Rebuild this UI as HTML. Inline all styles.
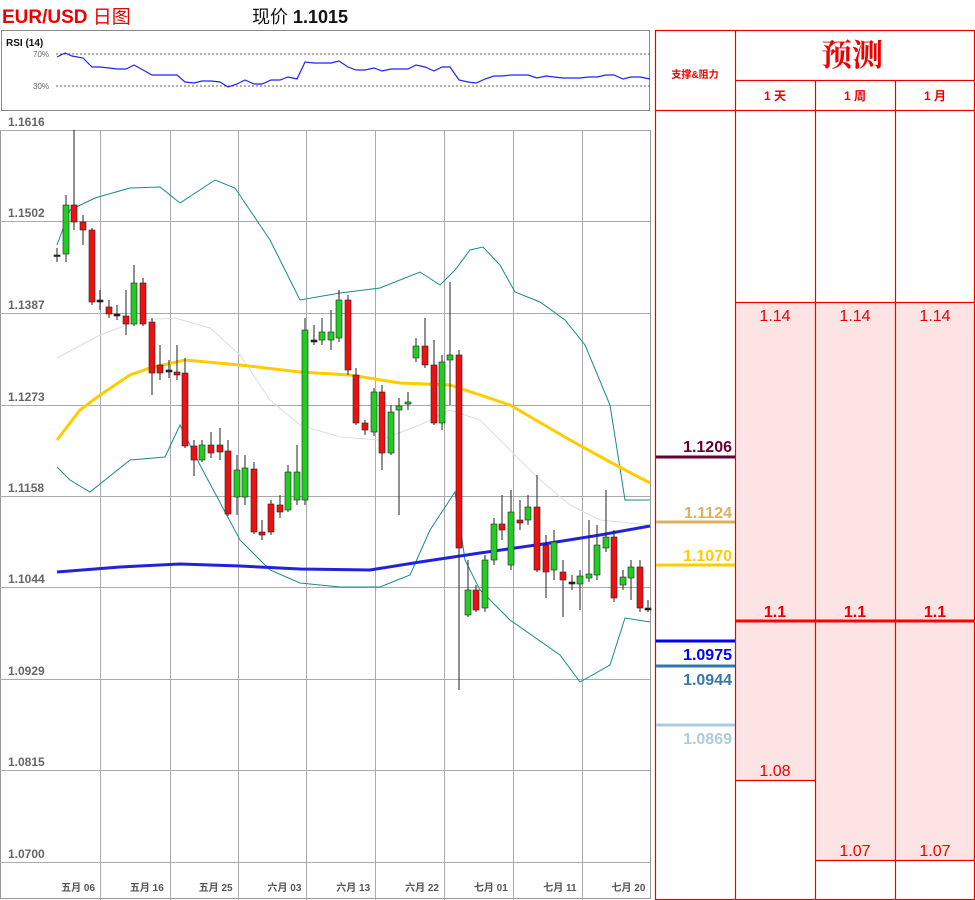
<!DOCTYPE html>
<html><head><meta charset="utf-8"><style>
body{margin:0;width:975px;height:900px;background:#fff;position:relative;overflow:hidden;font-family:"Liberation Sans","Noto Sans CJK SC",sans-serif}
.a{position:absolute}
</style></head><body>
<div class="a" style="left:2px;top:2px;color:#e00;font-weight:bold;font-size:19px">EUR/USD <span style="font-weight:normal">日图</span></div>
<div class="a" style="left:252px;top:3px;color:#111;font-size:18px">现价 <b>1.1015</b></div>
<svg class="a" style="left:0;top:0" width="975" height="900" id="s">
<rect x="1.5" y="30.5" width="648" height="80" fill="#fff" stroke="#888"/>
<text x="6" y="46" font-size="10" font-weight="bold" fill="#111" font-family="Liberation Sans">RSI (14)</text>
<line x1="56" y1="54" x2="650" y2="54" stroke="#666" stroke-dasharray="2,2"/>
<line x1="56" y1="86" x2="650" y2="86" stroke="#666" stroke-dasharray="2,2"/>
<text x="33" y="57" font-size="8" fill="#666" font-family="Liberation Sans">70%</text>
<text x="33" y="89" font-size="8" fill="#666" font-family="Liberation Sans">30%</text>
<polyline fill="none" stroke="#22f" stroke-width="1.2" points="57,57 65,53 72,56 83,58 92,67 100,67 109,68 117,69 126,69 134,65 143,70 152,75 160,75 169,75 177,75 185,82 194,83 202,81 211,81 220,82 228,87 237,84 245,80 254,84 262,84 271,80 280,80 288,77 297,79 305,62 314,63 322,63 331,63 339,61 348,67 356,70 365,70 374,68 382,71 391,69 399,69 408,69 416,65 425,67 434,71 442,67 450,67 459,80 468,82 476,83 485,79 494,76 502,76 511,75 520,75 528,75 537,78 546,76 554,77 563,78 572,78 580,78 589,77 597,77 606,75 614,75 623,79 631,77 640,77 650,79"/>
<rect x="0.5" y="130.5" width="650" height="768" fill="#fff" stroke="#999"/>
<g id="grid" stroke="#aaa" stroke-width="1"></g>
<g font-family="Liberation Sans" font-size="12" font-weight="bold" fill="#666" id="ylab"></g>
<g font-family="Liberation Sans,Noto Sans CJK SC" font-size="10" font-weight="bold" fill="#555" id="xlab"></g>
<polyline fill="none" stroke="#ddd" stroke-width="1" points="57,358 100,335 140,320 175,318 210,328 240,355 270,400 300,425 340,437 380,440 420,425 450,410 480,420 510,450 540,480 570,505 600,520 650,525"/>
<polyline fill="none" stroke="#1a8a8a" stroke-width="1" points="57,245 70,210 95,198 130,188 160,187 180,203 215,180 235,188 270,240 300,300 340,293 380,288 420,272 440,285 455,270 470,250 483,247 500,265 515,292 540,302 565,320 585,345 610,405 625,500 650,500"/>
<polyline fill="none" stroke="#1a8a8a" stroke-width="1" points="57,467 70,480 90,492 130,460 165,457 180,425 200,465 240,540 270,570 300,583 340,587 380,587 410,575 430,530 455,492 465,560 480,590 510,620 560,655 580,682 610,665 625,618 650,622"/>
<polyline fill="none" stroke="#fc0" stroke-width="3" points="57,440 80,410 100,395 130,375 150,368 185,360 240,365 300,372 350,375 400,383 450,385 510,405 570,440 610,462 650,483"/>
<polyline fill="none" stroke="#22d" stroke-width="3" points="57,572 120,567 180,564 240,566 300,569 370,570 420,562 480,553 550,543 600,535 650,526"/>
<g id="c"></g>
<rect x="735" y="302" width="240" height="598" fill="#fde4e4"/>
<rect x="735" y="780" width="80" height="120" fill="#fff"/>
<rect x="815" y="860" width="160" height="40" fill="#fff"/>
<g stroke="#e00" stroke-width="1.2" fill="none">
<rect x="655.5" y="30.5" width="319" height="869"/>
<line x1="735.5" y1="30" x2="735.5" y2="900"/>
<line x1="815.5" y1="80" x2="815.5" y2="900"/>
<line x1="895.5" y1="80" x2="895.5" y2="900"/>
<line x1="735" y1="80.5" x2="975" y2="80.5"/>
<line x1="655" y1="110.5" x2="975" y2="110.5"/>
<line x1="735" y1="302.5" x2="975" y2="302.5"/>
<line x1="735" y1="780.5" x2="815" y2="780.5"/>
<line x1="815" y1="860.5" x2="975" y2="860.5"/>
</g>
<line x1="735" y1="621" x2="975" y2="621" stroke="#f00" stroke-width="3"/>
<g font-family="Liberation Sans,Noto Sans CJK SC" fill="#e00" text-anchor="middle">
<text x="852" y="66" font-size="31" font-weight="bold" font-family="Noto Serif CJK SC,serif">预测</text>
<text x="695" y="78" font-size="10" font-weight="bold">支撑&amp;阻力</text>
<text x="775" y="100" font-size="12" font-weight="bold">1 天</text>
<text x="855" y="100" font-size="12" font-weight="bold">1 周</text>
<text x="935" y="100" font-size="12" font-weight="bold">1 月</text>
<text x="775" y="321" font-size="16">1.14</text><text x="855" y="321" font-size="16">1.14</text><text x="935" y="321" font-size="16">1.14</text>
<text x="775" y="617" font-size="16" font-weight="bold">1.1</text><text x="855" y="617" font-size="16" font-weight="bold">1.1</text><text x="935" y="617" font-size="16" font-weight="bold">1.1</text>
<text x="775" y="776" font-size="16">1.08</text>
<text x="855" y="856" font-size="16">1.07</text><text x="935" y="856" font-size="16">1.07</text>
</g>
<g font-family="Liberation Sans" font-size="16" font-weight="bold" text-anchor="end">
<line x1="656" y1="457" x2="735" y2="457" stroke="#603" stroke-width="3"/><text x="732" y="452" fill="#603">1.1206</text>
<line x1="656" y1="522" x2="735" y2="522" stroke="#dcb060" stroke-width="3"/><text x="732" y="518" fill="#dcb060">1.1124</text>
<line x1="656" y1="565" x2="735" y2="565" stroke="#fc0" stroke-width="3"/><text x="732" y="561" fill="#fc0">1.1070</text>
<line x1="656" y1="641" x2="735" y2="641" stroke="#00f" stroke-width="3"/><text x="732" y="660" fill="#00f">1.0975</text>
<line x1="656" y1="666" x2="735" y2="666" stroke="#37a" stroke-width="3"/><text x="732" y="685" fill="#37a">1.0944</text>
<line x1="656" y1="725" x2="735" y2="725" stroke="#acd" stroke-width="3"/><text x="732" y="744" fill="#acd">1.0869</text>
</g>
</svg>
<script>
var ns="http://www.w3.org/2000/svg";
function el(p,t,a,tx){var e=document.createElementNS(ns,t);for(var k in a)e.setAttribute(k,a[k]);if(tx)e.textContent=tx;p.appendChild(e);return e}
var g=document.getElementById('grid');
var ys=[130,221,313,405,496,587,679,770,862],labs=["1.1616","1.1502","1.1387","1.1273","1.1158","1.1044","1.0929","1.0815","1.0700"];
ys.forEach(function(y,i){el(g,'line',{x1:0,x2:650,y1:y+.5,y2:y+.5});el(document.getElementById('ylab'),'text',{x:8,y:y-4},labs[i])});
var xs=[100,170,238,306,375,444,513,582],dl=["五月 06","五月 16","五月 25","六月 03","六月 13","六月 22","七月 01","七月 11","七月 20"];
xs.forEach(function(x){el(g,'line',{x1:x+.5,x2:x+.5,y1:130,y2:900})});
dl.forEach(function(d,i){el(document.getElementById('xlab'),'text',{x:95+i*68.8,y:891,'text-anchor':'end'},d)});
var c=[[57,255,255,248,262],[66,254,205,195,262],[74,205,222,130,230],[83,222,230,215,245],[92,230,302,228,305],[100,300,302,290,310],[109,307,314,300,318],[117,314,316,305,320],[126,316,324,290,335],[134,324,283,265,326],[143,283,324,278,326],[152,322,373,318,395],[160,365,373,345,380],[169,370,372,360,378],[177,372,375,345,380],[185,373,446,358,448],[194,446,460,440,476],[202,460,445,440,462],[211,445,453,432,458],[220,445,452,428,460],[228,451,514,440,516],[237,497,470,455,515],[245,497,468,455,505],[254,469,532,462,534],[262,532,535,520,540],[271,504,532,500,535],[280,505,512,495,518],[288,510,472,465,512],[297,500,472,445,505],[305,500,330,318,505],[314,340,342,325,345],[322,340,332,318,345],[331,340,332,310,350],[339,338,300,290,342],[348,300,370,295,375],[356,375,423,368,425],[365,423,430,420,435],[374,432,392,388,436],[382,392,453,385,470],[391,453,412,405,455],[399,410,406,398,515],[408,404,402,392,410],[416,358,346,338,362],[425,346,365,318,368],[434,365,423,340,425],[442,423,362,355,430],[450,360,355,282,405],[459,355,548,350,690],[468,615,590,560,617],[476,590,610,585,612],[485,608,560,555,612],[494,560,524,518,565],[502,524,530,495,540],[511,565,512,490,570],[520,520,523,500,530],[528,520,507,495,525],[537,507,570,475,572],[546,545,572,535,598],[554,570,542,530,580],[563,572,580,560,617],[572,582,584,575,590],[580,584,576,570,610],[589,578,574,520,582],[597,575,545,525,580],[606,548,537,490,552],[614,537,598,530,602],[623,585,577,570,590],[631,578,567,560,600],[640,567,608,560,612],[648,608,610,600,612]];
var cg=document.getElementById('c');
c.forEach(function(d){var x=d[0],o=d[1],cl=d[2],up=cl<o;
el(cg,'line',{x1:x,x2:x,y1:d[3],y2:d[4],stroke:'#222','stroke-width':1});
var t=Math.min(o,cl),h=Math.max(Math.abs(o-cl),1.5);
el(cg,'rect',{x:x-3,y:t,width:6,height:h,fill:up?'#2c2':(h<3?'#222':'#e11'),stroke:'#222','stroke-width':0.6});});
</script>
</body></html>
